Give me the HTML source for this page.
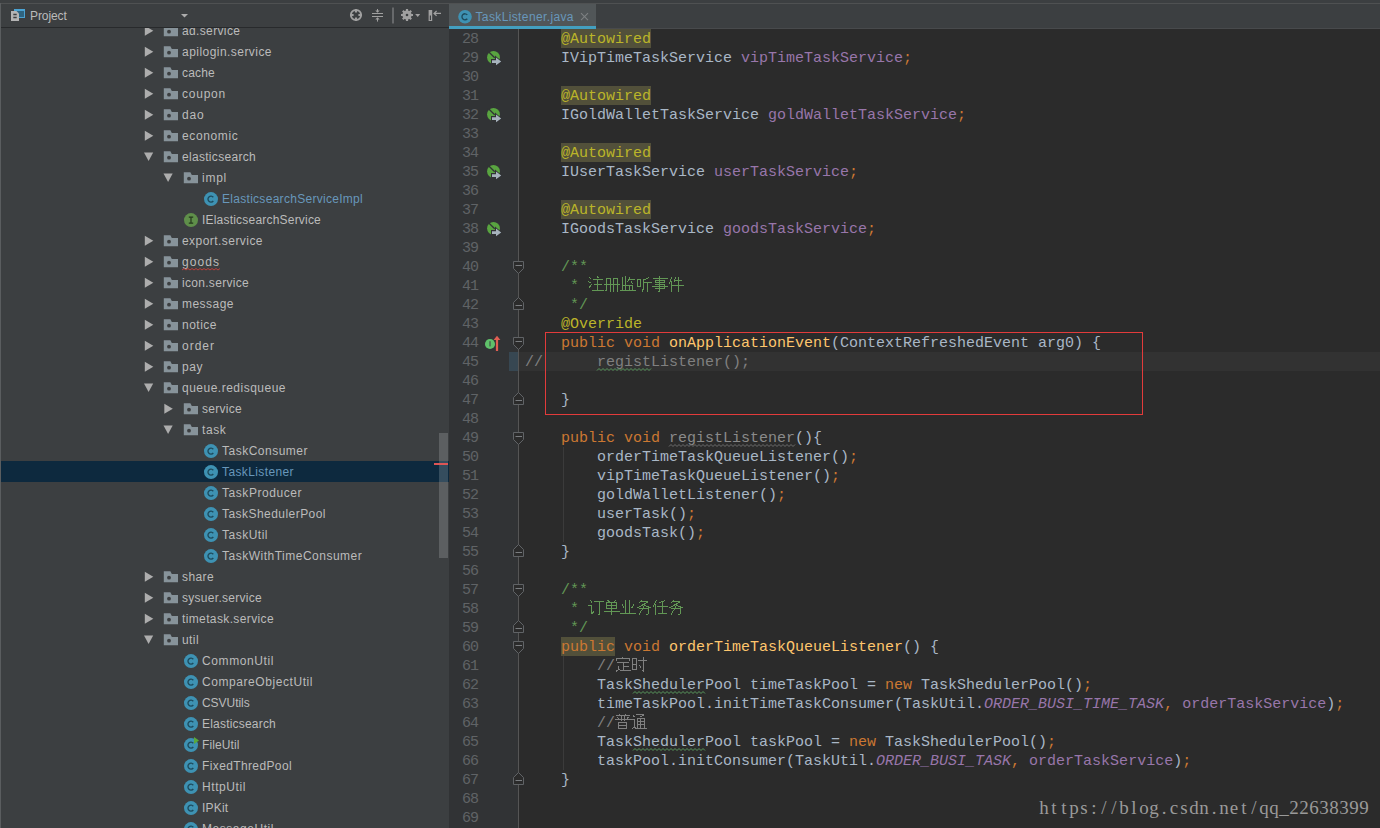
<!DOCTYPE html>
<html><head><meta charset="utf-8"><title>TaskListener.java</title>
<style>
html,body{margin:0;padding:0}
body{width:1380px;height:828px;overflow:hidden;position:relative;background:#2b2b2b;font-family:'Liberation Sans', sans-serif}
.abs,.abs>*{position:absolute}
#left{position:absolute;left:0;top:0;width:449px;height:828px;background:#3c3f41;overflow:hidden}
.row{position:absolute;left:0;width:449px;height:21px}
.lbl{position:absolute;white-space:pre;font:12px 'Liberation Sans', sans-serif;line-height:21px;height:21px;color:#bbbbbb;top:1px}
.blue{color:#6897bb}
svg{position:absolute;overflow:visible}
#code{position:absolute;left:0;top:0}
.ln{position:absolute;left:449px;width:29px;text-align:right;letter-spacing:-1px;font:15px 'Liberation Mono', monospace;line-height:19px;height:19px;color:#606366}
.cl{position:absolute;left:525px;white-space:pre;font:15px 'Liberation Mono', monospace;line-height:19px;height:19px;color:#a9b7c6}
.k{color:#cc7832}.a{color:#bbb529}.f{color:#9876aa}.sf{color:#9876aa;font-style:italic}.d{color:#629755}.c{color:#808080}.m{color:#ffc66d}
.hlb{position:absolute;height:19px;background:#52503a}
.g{color:#8a8a8a}
</style></head><body>

<div id="left">
<div class="row" style="top:19.5px;">
<svg style="left:0;top:0" width="1" height="1"><path d="M144.8 5.699999999999999L153.3 10.7L144.8 15.7Z" fill="#adadad"/></svg>
<svg style="left:0;top:0" width="1" height="1"><path d="M163.8 5.3h6.6l1.4 2.6h6.2v8.3h-14.2z" fill="#87939a"/><circle cx="169.0" cy="11.7" r="1.9" fill="#3c3f41"/></svg>
<span class="lbl" style="left:182.0px;letter-spacing:0.360px">ad.service</span>
</div>
<div class="row" style="top:40.5px;">
<svg style="left:0;top:0" width="1" height="1"><path d="M144.8 5.699999999999999L153.3 10.7L144.8 15.7Z" fill="#adadad"/></svg>
<svg style="left:0;top:0" width="1" height="1"><path d="M163.8 5.3h6.6l1.4 2.6h6.2v8.3h-14.2z" fill="#87939a"/><circle cx="169.0" cy="11.7" r="1.9" fill="#3c3f41"/></svg>
<span class="lbl" style="left:182.0px;letter-spacing:0.455px">apilogin.service</span>
</div>
<div class="row" style="top:61.5px;">
<svg style="left:0;top:0" width="1" height="1"><path d="M144.8 5.699999999999999L153.3 10.7L144.8 15.7Z" fill="#adadad"/></svg>
<svg style="left:0;top:0" width="1" height="1"><path d="M163.8 5.3h6.6l1.4 2.6h6.2v8.3h-14.2z" fill="#87939a"/><circle cx="169.0" cy="11.7" r="1.9" fill="#3c3f41"/></svg>
<span class="lbl" style="left:182.0px;letter-spacing:0.194px">cache</span>
</div>
<div class="row" style="top:82.5px;">
<svg style="left:0;top:0" width="1" height="1"><path d="M144.8 5.699999999999999L153.3 10.7L144.8 15.7Z" fill="#adadad"/></svg>
<svg style="left:0;top:0" width="1" height="1"><path d="M163.8 5.3h6.6l1.4 2.6h6.2v8.3h-14.2z" fill="#87939a"/><circle cx="169.0" cy="11.7" r="1.9" fill="#3c3f41"/></svg>
<span class="lbl" style="left:182.0px;letter-spacing:0.771px">coupon</span>
</div>
<div class="row" style="top:103.5px;">
<svg style="left:0;top:0" width="1" height="1"><path d="M144.8 5.699999999999999L153.3 10.7L144.8 15.7Z" fill="#adadad"/></svg>
<svg style="left:0;top:0" width="1" height="1"><path d="M163.8 5.3h6.6l1.4 2.6h6.2v8.3h-14.2z" fill="#87939a"/><circle cx="169.0" cy="11.7" r="1.9" fill="#3c3f41"/></svg>
<span class="lbl" style="left:182.0px;letter-spacing:0.856px">dao</span>
</div>
<div class="row" style="top:124.5px;">
<svg style="left:0;top:0" width="1" height="1"><path d="M144.8 5.699999999999999L153.3 10.7L144.8 15.7Z" fill="#adadad"/></svg>
<svg style="left:0;top:0" width="1" height="1"><path d="M163.8 5.3h6.6l1.4 2.6h6.2v8.3h-14.2z" fill="#87939a"/><circle cx="169.0" cy="11.7" r="1.9" fill="#3c3f41"/></svg>
<span class="lbl" style="left:182.0px;letter-spacing:0.618px">economic</span>
</div>
<div class="row" style="top:145.5px;">
<svg style="left:0;top:0" width="1" height="1"><path d="M144.0 6.499999999999999L153.2 6.499999999999999L148.6 14.899999999999999Z" fill="#adadad"/></svg>
<svg style="left:0;top:0" width="1" height="1"><path d="M163.8 5.3h6.6l1.4 2.6h6.2v8.3h-14.2z" fill="#87939a"/><circle cx="169.0" cy="11.7" r="1.9" fill="#3c3f41"/></svg>
<span class="lbl" style="left:182.0px;letter-spacing:0.305px">elasticsearch</span>
</div>
<div class="row" style="top:166.5px;">
<svg style="left:0;top:0" width="1" height="1"><path d="M163.5 6.499999999999999L172.7 6.499999999999999L168.1 14.899999999999999Z" fill="#adadad"/></svg>
<svg style="left:0;top:0" width="1" height="1"><path d="M183.8 5.3h6.6l1.4 2.6h6.2v8.3h-14.2z" fill="#87939a"/><circle cx="189.0" cy="11.7" r="1.9" fill="#3c3f41"/></svg>
<span class="lbl" style="left:202.0px;letter-spacing:0.746px">impl</span>
</div>
<div class="row" style="top:187.5px;">
<svg style="left:0;top:0" width="1" height="1"><circle cx="211" cy="11.1" r="7" fill="#3e92b3"/><path d="M213.3 9.2a3 3 0 1 0 0 3.8" stroke="#1d4a5c" stroke-width="1.35" fill="none"/></svg>
<span class="lbl blue" style="left:222.0px;letter-spacing:0.290px">ElasticsearchServiceImpl</span>
</div>
<div class="row" style="top:208.5px;">
<svg style="left:0;top:0" width="1" height="1"><circle cx="191" cy="11.1" r="7" fill="#5f8f4a"/><path d="M188.8 8.1h4.4M188.8 14.1h4.4M191 8.1v6" stroke="#25391d" stroke-width="1.2" fill="none"/></svg>
<span class="lbl" style="left:202.0px;letter-spacing:0.204px">IElasticsearchService</span>
</div>
<div class="row" style="top:229.5px;">
<svg style="left:0;top:0" width="1" height="1"><path d="M144.8 5.699999999999999L153.3 10.7L144.8 15.7Z" fill="#adadad"/></svg>
<svg style="left:0;top:0" width="1" height="1"><path d="M163.8 5.3h6.6l1.4 2.6h6.2v8.3h-14.2z" fill="#87939a"/><circle cx="169.0" cy="11.7" r="1.9" fill="#3c3f41"/></svg>
<span class="lbl" style="left:182.0px;letter-spacing:0.450px">export.service</span>
</div>
<div class="row" style="top:250.5px;">
<svg style="left:0;top:0" width="1" height="1"><path d="M144.8 5.699999999999999L153.3 10.7L144.8 15.7Z" fill="#adadad"/></svg>
<svg style="left:0;top:0" width="1" height="1"><path d="M163.8 5.3h6.6l1.4 2.6h6.2v8.3h-14.2z" fill="#87939a"/><circle cx="169.0" cy="11.7" r="1.9" fill="#3c3f41"/></svg>
<span class="lbl" style="left:182.0px;letter-spacing:1.059px">goods</span>
<svg style="left:0;top:0" width="1" height="1"><path d="M182 19L184 17.5L186 19L188 17.5L190 19L192 17.5L194 19L196 17.5L198 19L200 17.5L202 19L204 17.5L206 19L208 17.5L210 19L212 17.5L214 19L216 17.5L218 19L220 17.5" stroke="#bc3f3c" stroke-width="1" fill="none"/></svg>
</div>
<div class="row" style="top:271.5px;">
<svg style="left:0;top:0" width="1" height="1"><path d="M144.8 5.699999999999999L153.3 10.7L144.8 15.7Z" fill="#adadad"/></svg>
<svg style="left:0;top:0" width="1" height="1"><path d="M163.8 5.3h6.6l1.4 2.6h6.2v8.3h-14.2z" fill="#87939a"/><circle cx="169.0" cy="11.7" r="1.9" fill="#3c3f41"/></svg>
<span class="lbl" style="left:182.0px;letter-spacing:0.303px">icon.service</span>
</div>
<div class="row" style="top:292.5px;">
<svg style="left:0;top:0" width="1" height="1"><path d="M144.8 5.699999999999999L153.3 10.7L144.8 15.7Z" fill="#adadad"/></svg>
<svg style="left:0;top:0" width="1" height="1"><path d="M163.8 5.3h6.6l1.4 2.6h6.2v8.3h-14.2z" fill="#87939a"/><circle cx="169.0" cy="11.7" r="1.9" fill="#3c3f41"/></svg>
<span class="lbl" style="left:182.0px;letter-spacing:0.471px">message</span>
</div>
<div class="row" style="top:313.5px;">
<svg style="left:0;top:0" width="1" height="1"><path d="M144.8 5.699999999999999L153.3 10.7L144.8 15.7Z" fill="#adadad"/></svg>
<svg style="left:0;top:0" width="1" height="1"><path d="M163.8 5.3h6.6l1.4 2.6h6.2v8.3h-14.2z" fill="#87939a"/><circle cx="169.0" cy="11.7" r="1.9" fill="#3c3f41"/></svg>
<span class="lbl" style="left:182.0px;letter-spacing:0.495px">notice</span>
</div>
<div class="row" style="top:334.5px;">
<svg style="left:0;top:0" width="1" height="1"><path d="M144.8 5.699999999999999L153.3 10.7L144.8 15.7Z" fill="#adadad"/></svg>
<svg style="left:0;top:0" width="1" height="1"><path d="M163.8 5.3h6.6l1.4 2.6h6.2v8.3h-14.2z" fill="#87939a"/><circle cx="169.0" cy="11.7" r="1.9" fill="#3c3f41"/></svg>
<span class="lbl" style="left:182.0px;letter-spacing:0.997px">order</span>
</div>
<div class="row" style="top:355.5px;">
<svg style="left:0;top:0" width="1" height="1"><path d="M144.8 5.699999999999999L153.3 10.7L144.8 15.7Z" fill="#adadad"/></svg>
<svg style="left:0;top:0" width="1" height="1"><path d="M163.8 5.3h6.6l1.4 2.6h6.2v8.3h-14.2z" fill="#87939a"/><circle cx="169.0" cy="11.7" r="1.9" fill="#3c3f41"/></svg>
<span class="lbl" style="left:182.0px;letter-spacing:0.547px">pay</span>
</div>
<div class="row" style="top:376.5px;">
<svg style="left:0;top:0" width="1" height="1"><path d="M144.0 6.499999999999999L153.2 6.499999999999999L148.6 14.899999999999999Z" fill="#adadad"/></svg>
<svg style="left:0;top:0" width="1" height="1"><path d="M163.8 5.3h6.6l1.4 2.6h6.2v8.3h-14.2z" fill="#87939a"/><circle cx="169.0" cy="11.7" r="1.9" fill="#3c3f41"/></svg>
<span class="lbl" style="left:182.0px;letter-spacing:0.494px">queue.redisqueue</span>
</div>
<div class="row" style="top:397.5px;">
<svg style="left:0;top:0" width="1" height="1"><path d="M164.3 5.699999999999999L172.8 10.7L164.3 15.7Z" fill="#adadad"/></svg>
<svg style="left:0;top:0" width="1" height="1"><path d="M183.8 5.3h6.6l1.4 2.6h6.2v8.3h-14.2z" fill="#87939a"/><circle cx="189.0" cy="11.7" r="1.9" fill="#3c3f41"/></svg>
<span class="lbl" style="left:202.0px;letter-spacing:0.283px">service</span>
</div>
<div class="row" style="top:418.5px;">
<svg style="left:0;top:0" width="1" height="1"><path d="M163.5 6.499999999999999L172.7 6.499999999999999L168.1 14.899999999999999Z" fill="#adadad"/></svg>
<svg style="left:0;top:0" width="1" height="1"><path d="M183.8 5.3h6.6l1.4 2.6h6.2v8.3h-14.2z" fill="#87939a"/><circle cx="189.0" cy="11.7" r="1.9" fill="#3c3f41"/></svg>
<span class="lbl" style="left:202.0px;letter-spacing:0.571px">task</span>
</div>
<div class="row" style="top:439.5px;">
<svg style="left:0;top:0" width="1" height="1"><circle cx="211" cy="11.1" r="7" fill="#3e92b3"/><path d="M213.3 9.2a3 3 0 1 0 0 3.8" stroke="#1d4a5c" stroke-width="1.35" fill="none"/></svg>
<span class="lbl" style="left:222.0px;letter-spacing:0.497px">TaskConsumer</span>
</div>
<div class="row" style="top:460.5px;background:#0d293e;">
<svg style="left:0;top:0" width="1" height="1"><circle cx="211" cy="11.1" r="7" fill="#3e92b3"/><path d="M213.3 9.2a3 3 0 1 0 0 3.8" stroke="#1d4a5c" stroke-width="1.35" fill="none"/></svg>
<span class="lbl blue" style="left:222.0px;letter-spacing:0.385px">TaskListener</span>
</div>
<div class="row" style="top:481.5px;">
<svg style="left:0;top:0" width="1" height="1"><circle cx="211" cy="11.1" r="7" fill="#3e92b3"/><path d="M213.3 9.2a3 3 0 1 0 0 3.8" stroke="#1d4a5c" stroke-width="1.35" fill="none"/></svg>
<span class="lbl" style="left:222.0px;letter-spacing:0.552px">TaskProducer</span>
</div>
<div class="row" style="top:502.5px;">
<svg style="left:0;top:0" width="1" height="1"><circle cx="211" cy="11.1" r="7" fill="#3e92b3"/><path d="M213.3 9.2a3 3 0 1 0 0 3.8" stroke="#1d4a5c" stroke-width="1.35" fill="none"/></svg>
<span class="lbl" style="left:222.0px;letter-spacing:0.454px">TaskShedulerPool</span>
</div>
<div class="row" style="top:523.5px;">
<svg style="left:0;top:0" width="1" height="1"><circle cx="211" cy="11.1" r="7" fill="#3e92b3"/><path d="M213.3 9.2a3 3 0 1 0 0 3.8" stroke="#1d4a5c" stroke-width="1.35" fill="none"/></svg>
<span class="lbl" style="left:222.0px;letter-spacing:0.498px">TaskUtil</span>
</div>
<div class="row" style="top:544.5px;">
<svg style="left:0;top:0" width="1" height="1"><circle cx="211" cy="11.1" r="7" fill="#3e92b3"/><path d="M213.3 9.2a3 3 0 1 0 0 3.8" stroke="#1d4a5c" stroke-width="1.35" fill="none"/></svg>
<span class="lbl" style="left:222.0px;letter-spacing:0.502px">TaskWithTimeConsumer</span>
</div>
<div class="row" style="top:565.5px;">
<svg style="left:0;top:0" width="1" height="1"><path d="M144.8 5.699999999999999L153.3 10.7L144.8 15.7Z" fill="#adadad"/></svg>
<svg style="left:0;top:0" width="1" height="1"><path d="M163.8 5.3h6.6l1.4 2.6h6.2v8.3h-14.2z" fill="#87939a"/><circle cx="169.0" cy="11.7" r="1.9" fill="#3c3f41"/></svg>
<span class="lbl" style="left:182.0px;letter-spacing:0.394px">share</span>
</div>
<div class="row" style="top:586.5px;">
<svg style="left:0;top:0" width="1" height="1"><path d="M144.8 5.699999999999999L153.3 10.7L144.8 15.7Z" fill="#adadad"/></svg>
<svg style="left:0;top:0" width="1" height="1"><path d="M163.8 5.3h6.6l1.4 2.6h6.2v8.3h-14.2z" fill="#87939a"/><circle cx="169.0" cy="11.7" r="1.9" fill="#3c3f41"/></svg>
<span class="lbl" style="left:182.0px;letter-spacing:0.283px">sysuer.service</span>
</div>
<div class="row" style="top:607.5px;">
<svg style="left:0;top:0" width="1" height="1"><path d="M144.8 5.699999999999999L153.3 10.7L144.8 15.7Z" fill="#adadad"/></svg>
<svg style="left:0;top:0" width="1" height="1"><path d="M163.8 5.3h6.6l1.4 2.6h6.2v8.3h-14.2z" fill="#87939a"/><circle cx="169.0" cy="11.7" r="1.9" fill="#3c3f41"/></svg>
<span class="lbl" style="left:182.0px;letter-spacing:0.373px">timetask.service</span>
</div>
<div class="row" style="top:628.5px;">
<svg style="left:0;top:0" width="1" height="1"><path d="M144.0 6.499999999999999L153.2 6.499999999999999L148.6 14.899999999999999Z" fill="#adadad"/></svg>
<svg style="left:0;top:0" width="1" height="1"><path d="M163.8 5.3h6.6l1.4 2.6h6.2v8.3h-14.2z" fill="#87939a"/><circle cx="169.0" cy="11.7" r="1.9" fill="#3c3f41"/></svg>
<span class="lbl" style="left:182.0px;letter-spacing:0.414px">util</span>
</div>
<div class="row" style="top:649.5px;">
<svg style="left:0;top:0" width="1" height="1"><circle cx="191" cy="11.1" r="7" fill="#3e92b3"/><path d="M193.3 9.2a3 3 0 1 0 0 3.8" stroke="#1d4a5c" stroke-width="1.35" fill="none"/></svg>
<span class="lbl" style="left:202.0px;letter-spacing:0.598px">CommonUtil</span>
</div>
<div class="row" style="top:670.5px;">
<svg style="left:0;top:0" width="1" height="1"><circle cx="191" cy="11.1" r="7" fill="#3e92b3"/><path d="M193.3 9.2a3 3 0 1 0 0 3.8" stroke="#1d4a5c" stroke-width="1.35" fill="none"/></svg>
<span class="lbl" style="left:202.0px;letter-spacing:0.566px">CompareObjectUtil</span>
</div>
<div class="row" style="top:691.5px;">
<svg style="left:0;top:0" width="1" height="1"><circle cx="191" cy="11.1" r="7" fill="#3e92b3"/><path d="M193.3 9.2a3 3 0 1 0 0 3.8" stroke="#1d4a5c" stroke-width="1.35" fill="none"/></svg>
<span class="lbl" style="left:202.0px;letter-spacing:-0.052px">CSVUtils</span>
</div>
<div class="row" style="top:712.5px;">
<svg style="left:0;top:0" width="1" height="1"><circle cx="191" cy="11.1" r="7" fill="#3e92b3"/><path d="M193.3 9.2a3 3 0 1 0 0 3.8" stroke="#1d4a5c" stroke-width="1.35" fill="none"/></svg>
<span class="lbl" style="left:202.0px;letter-spacing:0.202px">Elasticsearch</span>
</div>
<div class="row" style="top:733.5px;">
<svg style="left:0;top:0" width="1" height="1"><circle cx="191" cy="11.1" r="7" fill="#3e92b3"/><path d="M193.3 9.2a3 3 0 1 0 0 3.8" stroke="#1d4a5c" stroke-width="1.35" fill="none"/><path d="M194 3.0999999999999996l5 3.5l-5 3.5z" fill="#59a83b"/></svg>
<span class="lbl" style="left:202.0px;letter-spacing:0.116px">FileUtil</span>
</div>
<div class="row" style="top:754.5px;">
<svg style="left:0;top:0" width="1" height="1"><circle cx="191" cy="11.1" r="7" fill="#3e92b3"/><path d="M193.3 9.2a3 3 0 1 0 0 3.8" stroke="#1d4a5c" stroke-width="1.35" fill="none"/></svg>
<span class="lbl" style="left:202.0px;letter-spacing:0.377px">FixedThredPool</span>
</div>
<div class="row" style="top:775.5px;">
<svg style="left:0;top:0" width="1" height="1"><circle cx="191" cy="11.1" r="7" fill="#3e92b3"/><path d="M193.3 9.2a3 3 0 1 0 0 3.8" stroke="#1d4a5c" stroke-width="1.35" fill="none"/></svg>
<span class="lbl" style="left:202.0px;letter-spacing:0.582px">HttpUtil</span>
</div>
<div class="row" style="top:796.5px;">
<svg style="left:0;top:0" width="1" height="1"><circle cx="191" cy="11.1" r="7" fill="#3e92b3"/><path d="M193.3 9.2a3 3 0 1 0 0 3.8" stroke="#1d4a5c" stroke-width="1.35" fill="none"/></svg>
<span class="lbl" style="left:202.0px;letter-spacing:0.191px">IPKit</span>
</div>
<div class="row" style="top:817.5px;">
<svg style="left:0;top:0" width="1" height="1"><circle cx="191" cy="11.1" r="7" fill="#3e92b3"/><path d="M193.3 9.2a3 3 0 1 0 0 3.8" stroke="#1d4a5c" stroke-width="1.35" fill="none"/></svg>
<span class="lbl" style="left:202.0px;letter-spacing:0.543px">MessageUtil</span>
</div>
<div style="position:absolute;left:439px;top:433px;width:9px;height:125px;background:rgba(255,255,255,0.17)"></div>
<div style="position:absolute;left:434px;top:463px;width:14px;height:2px;background:#dd5555"></div>
<div style="position:absolute;left:0;top:0;width:449px;height:27px;background:#3c3f41"></div>
<div style="position:absolute;left:0;top:3px;width:449px;height:1px;background:#4f5152"></div>
<div style="position:absolute;left:0;top:27px;width:449px;height:1px;background:#282a2c"></div>
<div style="position:absolute;left:0;top:3px;width:1px;height:825px;background:#5a5d5f"></div>
<svg style="left:0;top:0" width="1" height="1"><rect x="14.5" y="9.5" width="10" height="8" fill="#2f6480" stroke="#4ba3d3" stroke-width="1"/><rect x="14" y="9" width="11" height="2" fill="#4ba3d3"/><path d="M11 11h5.5l2.5 2.5v7.5h-8z" fill="#b4b4b4"/><path d="M13.3 14.5h3.4M13.3 17.5h3.4" stroke="#3c3f41" stroke-width="1.4"/></svg>
<span style="position:absolute;left:30px;top:7px;font:12px 'Liberation Sans', sans-serif;line-height:19px;color:#bbbbbb;letter-spacing:-0.080px">Project</span>
<svg style="left:0;top:0" width="1" height="1"><path d="M181 14h7l-3.5 3.6z" fill="#adadad"/></svg>
<svg style="left:0;top:0" width="1" height="1"><circle cx="356" cy="15" r="5.1" fill="none" stroke="#a0a0a0" stroke-width="2"/><path d="M356 9v3.6M356 17.4v3.6M350 15h3.6M358.4 15h3.6" stroke="#a0a0a0" stroke-width="2"/><path d="M372 13.5h11M372 16.5h11" stroke="#a0a0a0" stroke-width="1"/><path d="M377.5 9v3M377.5 18v3.6" stroke="#a0a0a0" stroke-width="1"/><path d="M375.3 10.4l2.2 2.4l2.2-2.4zM375.3 19.6l2.2-2.4l2.2 2.4z" fill="#a0a0a0"/><rect x="392" y="7.5" width="2" height="16" fill="#67696b"/><circle cx="407" cy="15" r="3.3" fill="none" stroke="#a0a0a0" stroke-width="2.6"/><path d="M407 9v12M401 15h12M402.8 10.8l8.4 8.4M411.2 10.8l-8.4 8.4" stroke="#a0a0a0" stroke-width="2.2"/><circle cx="407" cy="15" r="1.3" fill="#3c3f41"/><path d="M415.2 14h5l-2.5 3z" fill="#a0a0a0"/><rect x="428.6" y="10" width="3.6" height="11" fill="#a0a0a0"/><rect x="429.8" y="15.5" width="1.2" height="4.5" fill="#3c3f41"/><path d="M434 13.4h7M436.6 11l-2.6 2.4l2.6 2.4" stroke="#a0a0a0" stroke-width="1.2" fill="none"/></svg>
</div>
<div style="position:absolute;left:449px;top:0;width:931px;height:29px;background:#3c3f41"></div>
<div style="position:absolute;left:449px;top:3px;width:931px;height:1px;background:#4f5152"></div>
<div style="position:absolute;left:449px;top:28px;width:931px;height:1px;background:#484a4c"></div>
<div style="position:absolute;left:449px;top:4px;width:147px;height:22px;background:#515658"></div>
<div style="position:absolute;left:449px;top:26px;width:147px;height:3px;background:#439fc0"></div>
<svg style="left:0;top:0" width="1" height="1"><circle cx="465" cy="16.8" r="6.8" fill="#3e92b3"/><path d="M467.3 14.9a3 3 0 1 0 0 3.8" stroke="#1d4a5c" stroke-width="1.35" fill="none"/><path d="M581 13.2l7 7M588 13.2l-7 7" stroke="#7d8082" stroke-width="1.1"/></svg>
<span style="position:absolute;left:475.5px;top:8px;font:12px 'Liberation Sans', sans-serif;line-height:19px;color:#6897bb;letter-spacing:0.373px">TaskListener.java</span>
<div style="position:absolute;left:449px;top:29px;width:69px;height:799px;background:#313335"></div>
<div style="position:absolute;left:518px;top:29px;width:1px;height:799px;background:#555555"></div>
<div style="position:absolute;left:519px;top:352px;width:861px;height:19px;background:#323232"></div>
<div style="position:absolute;left:509px;top:352px;width:9px;height:19px;background:#374752"></div>
<div class="ln" style="top:30px">28</div>
<div class="hlb" style="left:561px;top:29px;width:90px"></div>
<div class="cl" style="top:30px">    <span class="a hl">@Autowired</span></div>
<div class="ln" style="top:49px">29</div>
<div class="cl" style="top:49px">    IVipTimeTaskService <span class="f">vipTimeTaskService</span><span class="k">;</span></div>
<div class="ln" style="top:68px">30</div>
<div class="ln" style="top:87px">31</div>
<div class="hlb" style="left:561px;top:86px;width:90px"></div>
<div class="cl" style="top:87px">    <span class="a hl">@Autowired</span></div>
<div class="ln" style="top:106px">32</div>
<div class="cl" style="top:106px">    IGoldWalletTaskService <span class="f">goldWalletTaskService</span><span class="k">;</span></div>
<div class="ln" style="top:125px">33</div>
<div class="ln" style="top:144px">34</div>
<div class="hlb" style="left:561px;top:143px;width:90px"></div>
<div class="cl" style="top:144px">    <span class="a hl">@Autowired</span></div>
<div class="ln" style="top:163px">35</div>
<div class="cl" style="top:163px">    IUserTaskService <span class="f">userTaskService</span><span class="k">;</span></div>
<div class="ln" style="top:182px">36</div>
<div class="ln" style="top:201px">37</div>
<div class="hlb" style="left:561px;top:200px;width:90px"></div>
<div class="cl" style="top:201px">    <span class="a hl">@Autowired</span></div>
<div class="ln" style="top:220px">38</div>
<div class="cl" style="top:220px">    IGoodsTaskService <span class="f">goodsTaskService</span><span class="k">;</span></div>
<div class="ln" style="top:239px">39</div>
<div class="ln" style="top:258px">40</div>
<div class="cl" style="top:258px">    <span class="d">/**</span></div>
<div class="ln" style="top:277px">41</div>
<div class="cl" style="top:277px">    <span class="d"> * </span></div>
<div class="ln" style="top:296px">42</div>
<div class="cl" style="top:296px">    <span class="d"> */</span></div>
<div class="ln" style="top:315px">43</div>
<div class="cl" style="top:315px">    <span class="a">@Override</span></div>
<div class="ln" style="top:334px">44</div>
<div class="cl" style="top:334px">    <span class="k">public void </span><span class="m">onApplicationEvent</span>(ContextRefreshedEvent arg0) {</div>
<div class="ln" style="top:353px">45</div>
<div class="cl" style="top:353px"><span class="c">//      registListener();</span></div>
<div class="ln" style="top:372px">46</div>
<div class="ln" style="top:391px">47</div>
<div class="cl" style="top:391px">    }</div>
<div class="ln" style="top:410px">48</div>
<div class="ln" style="top:429px">49</div>
<div class="cl" style="top:429px">    <span class="k">public void </span><span class="g">registListener</span>(){</div>
<div class="ln" style="top:448px">50</div>
<div class="cl" style="top:448px">        orderTimeTaskQueueListener()<span class="k">;</span></div>
<div class="ln" style="top:467px">51</div>
<div class="cl" style="top:467px">        vipTimeTaskQueueListener()<span class="k">;</span></div>
<div class="ln" style="top:486px">52</div>
<div class="cl" style="top:486px">        goldWalletListener()<span class="k">;</span></div>
<div class="ln" style="top:505px">53</div>
<div class="cl" style="top:505px">        userTask()<span class="k">;</span></div>
<div class="ln" style="top:524px">54</div>
<div class="cl" style="top:524px">        goodsTask()<span class="k">;</span></div>
<div class="ln" style="top:543px">55</div>
<div class="cl" style="top:543px">    }</div>
<div class="ln" style="top:562px">56</div>
<div class="ln" style="top:581px">57</div>
<div class="cl" style="top:581px">    <span class="d">/**</span></div>
<div class="ln" style="top:600px">58</div>
<div class="cl" style="top:600px">    <span class="d"> * </span></div>
<div class="ln" style="top:619px">59</div>
<div class="cl" style="top:619px">    <span class="d"> */</span></div>
<div class="ln" style="top:638px">60</div>
<div class="hlb" style="left:561px;top:637px;width:54px"></div>
<div class="cl" style="top:638px">    <span class="k hl2">public</span><span class="k"> void </span><span class="m">orderTimeTaskQueueListener</span>() {</div>
<div class="ln" style="top:657px">61</div>
<div class="cl" style="top:657px">        <span class="c">//</span></div>
<div class="ln" style="top:676px">62</div>
<div class="cl" style="top:676px">        TaskShedulerPool timeTaskPool = <span class="k">new </span>TaskShedulerPool()<span class="k">;</span></div>
<div class="ln" style="top:695px">63</div>
<div class="cl" style="top:695px">        timeTaskPool.initTimeTaskConsumer(TaskUtil.<span class="sf">ORDER_BUSI_TIME_TASK</span><span class="k">, </span><span class="f">orderTaskService</span>)<span class="k">;</span></div>
<div class="ln" style="top:714px">64</div>
<div class="cl" style="top:714px">        <span class="c">//</span></div>
<div class="ln" style="top:733px">65</div>
<div class="cl" style="top:733px">        TaskShedulerPool taskPool = <span class="k">new </span>TaskShedulerPool()<span class="k">;</span></div>
<div class="ln" style="top:752px">66</div>
<div class="cl" style="top:752px">        taskPool.initConsumer(TaskUtil.<span class="sf">ORDER_BUSI_TASK</span><span class="k">, </span><span class="f">orderTaskService</span>)<span class="k">;</span></div>
<div class="ln" style="top:771px">67</div>
<div class="cl" style="top:771px">    }</div>
<div class="ln" style="top:790px">68</div>
<div class="ln" style="top:809px">69</div>
<svg style="left:588px;top:276px" width="16" height="16" viewBox="0 0 16 16"><path d="M1.5 1.5L3.5 3.5M0.5 5.5L2.5 7.0M0.5 12.5L3.5 8.5M9.5 0.5L10.5 2.5M5.0 3.5H15.0M6.0 8.5H14.0M9.5 3.0V15.0M4.0 14.5H16.0" stroke="#629755" stroke-width="1" fill="none" shape-rendering="crispEdges"/></svg>
<svg style="left:604px;top:276px" width="16" height="16" viewBox="0 0 16 16"><path d="M2.5 2.0V13.0M3.0 12.5L1.5 15.5M2.0 2.5H7.0M6.5 2.0V15.5M9.5 2.0V15.5M9.0 2.5H14.0M13.5 2.0V16.0M0.0 8.5H16.0" stroke="#629755" stroke-width="1" fill="none" shape-rendering="crispEdges"/></svg>
<svg style="left:620px;top:276px" width="16" height="16" viewBox="0 0 16 16"><path d="M2.5 1.0V10.0M5.5 0.0V10.0M10.0 1.5L7.5 6.0M8.0 3.5H15.0M11.0 5.5L13.0 8.0M2.0 9.5H13.0M2.5 9.5V15.0M5.5 9.5V15.0M9.5 9.5V15.0M12.5 9.5V15.0M0.0 14.5H16.0" stroke="#629755" stroke-width="1" fill="none" shape-rendering="crispEdges"/></svg>
<svg style="left:636px;top:276px" width="16" height="16" viewBox="0 0 16 16"><path d="M1.0 3.5H5.0M1.0 10.5H5.0M1.5 3.0V11.0M4.5 3.0V11.0M13.5 1.5L8.5 3.5M7.5 3.0V12.0M8.0 11.5L6.0 15.5M7.0 6.5H16.0M11.5 6.0V16.0" stroke="#629755" stroke-width="1" fill="none" shape-rendering="crispEdges"/></svg>
<svg style="left:652px;top:276px" width="16" height="16" viewBox="0 0 16 16"><path d="M1.0 2.5H16.0M3.0 4.5H13.0M3.0 6.5H13.0M3.5 4.0V7.0M12.5 4.0V7.0M3.0 8.5H13.0M0.0 10.5H16.0M3.0 12.5H13.0M12.5 8.0V13.0M7.5 0.0V16.0M8.0 15.5L6.5 15.0" stroke="#629755" stroke-width="1" fill="none" shape-rendering="crispEdges"/></svg>
<svg style="left:668px;top:276px" width="16" height="16" viewBox="0 0 16 16"><path d="M4.0 1.0L1.0 8.0M3.5 4.5V16.0M7.5 1.5L6.0 5.5M6.0 4.5H14.0M4.0 9.5H16.0M10.5 0.5V16.0" stroke="#629755" stroke-width="1" fill="none" shape-rendering="crispEdges"/></svg>
<svg style="left:588px;top:599px" width="16" height="16" viewBox="0 0 16 16"><path d="M2.5 1.5L4.0 3.5M0.0 6.5H4.0M3.5 6.0V15.0M4.0 14.5L6.0 12.5M6.0 2.5H16.0M11.5 2.5V16.0M12.0 15.5L10.0 15.0" stroke="#629755" stroke-width="1" fill="none" shape-rendering="crispEdges"/></svg>
<svg style="left:604px;top:599px" width="16" height="16" viewBox="0 0 16 16"><path d="M3.5 1.0L5.5 3.0M12.0 1.0L10.0 3.0M2.0 3.5H13.0M2.0 9.5H13.0M2.5 3.0V10.0M12.5 3.0V10.0M2.0 6.5H13.0M0.0 12.5H16.0M7.5 3.5V16.0" stroke="#629755" stroke-width="1" fill="none" shape-rendering="crispEdges"/></svg>
<svg style="left:620px;top:599px" width="16" height="16" viewBox="0 0 16 16"><path d="M5.5 0.5V15.0M9.5 0.5V15.0M2.0 5.0L4.0 9.0M14.0 5.0L11.5 9.5M0.0 14.5H16.0" stroke="#629755" stroke-width="1" fill="none" shape-rendering="crispEdges"/></svg>
<svg style="left:636px;top:599px" width="16" height="16" viewBox="0 0 16 16"><path d="M6.0 1.0L3.0 4.0M4.0 2.5H12.0M12.0 3.0L1.5 9.0M6.5 5.5L15.0 9.0M3.0 9.5H13.0M12.5 10.0L12.0 15.0M12.0 15.0L10.5 15.5M8.0 7.5L3.0 15.5" stroke="#629755" stroke-width="1" fill="none" shape-rendering="crispEdges"/></svg>
<svg style="left:652px;top:599px" width="16" height="16" viewBox="0 0 16 16"><path d="M4.5 1.0L1.0 8.0M3.5 4.5V16.0M13.5 1.5L7.0 3.5M5.0 7.5H16.0M10.5 2.5V15.0M6.0 14.5H15.0" stroke="#629755" stroke-width="1" fill="none" shape-rendering="crispEdges"/></svg>
<svg style="left:668px;top:599px" width="16" height="16" viewBox="0 0 16 16"><path d="M6.0 1.0L3.0 4.0M4.0 2.5H12.0M12.0 3.0L1.5 9.0M6.5 5.5L15.0 9.0M3.0 9.5H13.0M12.5 10.0L12.0 15.0M12.0 15.0L10.5 15.5M8.0 7.5L3.0 15.5" stroke="#629755" stroke-width="1" fill="none" shape-rendering="crispEdges"/></svg>
<svg style="left:615px;top:656px" width="16" height="16" viewBox="0 0 16 16"><path d="M7.0 1.0L8.5 2.5M1.0 2.5H15.0M2.0 3.0L1.0 5.0M15.0 3.0L14.0 5.0M2.0 6.5H14.0M8.5 6.5V15.0M8.0 10.5H14.0M3.5 9.5V13.5M4.0 13.0L1.0 15.5M4.0 13.0L6.5 15.0M6.0 14.5H16.0" stroke="#808080" stroke-width="1" fill="none" shape-rendering="crispEdges"/></svg>
<svg style="left:631px;top:656px" width="16" height="16" viewBox="0 0 16 16"><path d="M1.0 2.5H6.0M1.0 13.5H6.0M1.5 2.0V14.0M5.5 2.0V14.0M1.0 8.5H6.0M7.0 4.5H16.0M12.5 0.5V16.0M13.0 15.5L11.0 14.5M8.5 9.0L10.0 11.5" stroke="#808080" stroke-width="1" fill="none" shape-rendering="crispEdges"/></svg>
<svg style="left:615px;top:713px" width="16" height="16" viewBox="0 0 16 16"><path d="M4.5 1.0L5.5 2.5M11.0 1.0L10.0 2.5M1.0 2.5H15.0M6.5 2.5V7.5M9.5 2.5V7.5M2.5 4.0L3.5 6.0M13.5 4.0L12.0 6.0M0.0 6.5H16.0M3.0 9.5H12.0M3.0 15.5H12.0M3.5 9.0V16.0M11.5 9.0V16.0M3.0 12.5H12.0" stroke="#808080" stroke-width="1" fill="none" shape-rendering="crispEdges"/></svg>
<svg style="left:631px;top:713px" width="16" height="16" viewBox="0 0 16 16"><path d="M2.0 2.0L3.5 4.0M0.0 6.5H4.0M3.5 6.5V15.0M3.5 14.5L1.0 15.5M3.5 14.5L5.5 15.5M5.0 15.5H16.0M5.0 1.5H13.0M13.0 2.0L9.5 4.0M6.0 5.5H14.0M6.5 5.5V15.0M13.5 5.5V15.5M9.5 5.5V15.0M6.0 8.5H14.0M6.0 11.5H14.0" stroke="#808080" stroke-width="1" fill="none" shape-rendering="crispEdges"/></svg>
<svg style="left:0;top:0" width="1" height="1"><path d="M597 370.5L599 368.5L601 370.5L603 368.5L605 370.5L607 368.5L609 370.5L611 368.5L613 370.5L615 368.5L617 370.5L619 368.5L621 370.5L623 368.5L625 370.5L627 368.5L629 370.5L631 368.5L633 370.5L635 368.5L637 370.5L639 368.5L641 370.5L643 368.5L645 370.5L647 368.5L649 370.5L651 368.5" stroke="#5a9a5e" stroke-width="1" fill="none"/></svg>
<svg style="left:0;top:0" width="1" height="1"><path d="M669 446.5L671 444.5L673 446.5L675 444.5L677 446.5L679 444.5L681 446.5L683 444.5L685 446.5L687 444.5L689 446.5L691 444.5L693 446.5L695 444.5L697 446.5L699 444.5L701 446.5L703 444.5L705 446.5L707 444.5L709 446.5L711 444.5L713 446.5L715 444.5L717 446.5L719 444.5L721 446.5L723 444.5L725 446.5L727 444.5L729 446.5L731 444.5L733 446.5L735 444.5L737 446.5L739 444.5L741 446.5L743 444.5L745 446.5L747 444.5L749 446.5L751 444.5L753 446.5L755 444.5L757 446.5L759 444.5L761 446.5L763 444.5L765 446.5L767 444.5L769 446.5L771 444.5L773 446.5L775 444.5L777 446.5L779 444.5L781 446.5L783 444.5L785 446.5L787 444.5L789 446.5L791 444.5L793 446.5L795 444.5" stroke="#6e6e6e" stroke-width="1" fill="none"/></svg>
<svg style="left:0;top:0" width="1" height="1"><path d="M633 693.5L635 691.5L637 693.5L639 691.5L641 693.5L643 691.5L645 693.5L647 691.5L649 693.5L651 691.5L653 693.5L655 691.5L657 693.5L659 691.5L661 693.5L663 691.5L665 693.5L667 691.5L669 693.5L671 691.5L673 693.5L675 691.5L677 693.5L679 691.5L681 693.5L683 691.5L685 693.5L687 691.5L689 693.5L691 691.5L693 693.5L695 691.5L697 693.5L699 691.5L701 693.5L703 691.5L705 693.5" stroke="#5a9a5e" stroke-width="1" fill="none"/></svg>
<svg style="left:0;top:0" width="1" height="1"><path d="M633 750.5L635 748.5L637 750.5L639 748.5L641 750.5L643 748.5L645 750.5L647 748.5L649 750.5L651 748.5L653 750.5L655 748.5L657 750.5L659 748.5L661 750.5L663 748.5L665 750.5L667 748.5L669 750.5L671 748.5L673 750.5L675 748.5L677 750.5L679 748.5L681 750.5L683 748.5L685 750.5L687 748.5L689 750.5L691 748.5L693 750.5L695 748.5L697 750.5L699 748.5L701 750.5L703 748.5L705 750.5" stroke="#5a9a5e" stroke-width="1" fill="none"/></svg>
<div style="position:absolute;left:563px;top:447px;width:1px;height:95px;background:#3b3b3b"></div>
<div style="position:absolute;left:563px;top:656px;width:1px;height:114px;background:#3b3b3b"></div>
<svg style="left:0;top:0" width="1" height="1"><circle cx="493.5" cy="57.4" r="6.4" fill="#59a540"/><path d="M488.3 51.5L494.7 57.7" stroke="#313335" stroke-width="1.3"/><path d="M491.0 59.1H495.0V55.5L502.1 61.5L495.0 66.5V64.0H491.0Z" fill="#313335"/><path d="M492.0 60.2H496.0V57.5L501.2 61.5L496.0 65.3V62.9H492.0Z" fill="#a7b3bd"/></svg>
<svg style="left:0;top:0" width="1" height="1"><circle cx="493.5" cy="114.39999999999999" r="6.4" fill="#59a540"/><path d="M488.3 108.5L494.7 114.69999999999999" stroke="#313335" stroke-width="1.3"/><path d="M491.0 116.1H495.0V112.5L502.1 118.5L495.0 123.5V121.0H491.0Z" fill="#313335"/><path d="M492.0 117.19999999999999H496.0V114.5L501.2 118.5L496.0 122.3V119.89999999999999H492.0Z" fill="#a7b3bd"/></svg>
<svg style="left:0;top:0" width="1" height="1"><circle cx="493.5" cy="171.4" r="6.4" fill="#59a540"/><path d="M488.3 165.5L494.7 171.7" stroke="#313335" stroke-width="1.3"/><path d="M491.0 173.1H495.0V169.5L502.1 175.5L495.0 180.5V178.0H491.0Z" fill="#313335"/><path d="M492.0 174.2H496.0V171.5L501.2 175.5L496.0 179.29999999999998V176.9H492.0Z" fill="#a7b3bd"/></svg>
<svg style="left:0;top:0" width="1" height="1"><circle cx="493.5" cy="228.4" r="6.4" fill="#59a540"/><path d="M488.3 222.5L494.7 228.7" stroke="#313335" stroke-width="1.3"/><path d="M491.0 230.1H495.0V226.5L502.1 232.5L495.0 237.5V235.0H491.0Z" fill="#313335"/><path d="M492.0 231.2H496.0V228.5L501.2 232.5L496.0 236.29999999999998V233.9H492.0Z" fill="#a7b3bd"/></svg>
<svg style="left:0;top:0" width="1" height="1"><circle cx="490" cy="344" r="5.05" fill="#5fc16a"/><rect x="489" y="341.2" width="2" height="5.2" fill="#4d7d54"/><path d="M497 351V338" stroke="#e05e52" stroke-width="2.2"/><path d="M493.6 340L497 335.8L500.4 340Z" fill="#e05e52"/></svg>
<svg style="left:0;top:0" width="1" height="1"><path d="M513.5 261.5H523.5V268.5L518.5 273.5L513.5 268.5Z" fill="#2b2b2b" stroke="#606366" stroke-width="1"/><path d="M515.5 265.5H522" stroke="#7a7d80" stroke-width="1"/></svg>
<svg style="left:0;top:0" width="1" height="1"><path d="M513.5 337.5H523.5V344.5L518.5 349.5L513.5 344.5Z" fill="#2b2b2b" stroke="#606366" stroke-width="1"/><path d="M515.5 341.5H522" stroke="#7a7d80" stroke-width="1"/></svg>
<svg style="left:0;top:0" width="1" height="1"><path d="M513.5 432.5H523.5V439.5L518.5 444.5L513.5 439.5Z" fill="#2b2b2b" stroke="#606366" stroke-width="1"/><path d="M515.5 436.5H522" stroke="#7a7d80" stroke-width="1"/></svg>
<svg style="left:0;top:0" width="1" height="1"><path d="M513.5 584.5H523.5V591.5L518.5 596.5L513.5 591.5Z" fill="#2b2b2b" stroke="#606366" stroke-width="1"/><path d="M515.5 588.5H522" stroke="#7a7d80" stroke-width="1"/></svg>
<svg style="left:0;top:0" width="1" height="1"><path d="M513.5 641.5H523.5V648.5L518.5 653.5L513.5 648.5Z" fill="#2b2b2b" stroke="#606366" stroke-width="1"/><path d="M515.5 645.5H522" stroke="#7a7d80" stroke-width="1"/></svg>
<svg style="left:0;top:0" width="1" height="1"><path d="M513.5 309.5H523.5V302.5L518.5 297.5L513.5 302.5Z" fill="#2b2b2b" stroke="#606366" stroke-width="1"/><path d="M515.5 305.5H522" stroke="#7a7d80" stroke-width="1"/></svg>
<svg style="left:0;top:0" width="1" height="1"><path d="M513.5 404.5H523.5V397.5L518.5 392.5L513.5 397.5Z" fill="#2b2b2b" stroke="#606366" stroke-width="1"/><path d="M515.5 400.5H522" stroke="#7a7d80" stroke-width="1"/></svg>
<svg style="left:0;top:0" width="1" height="1"><path d="M513.5 556.5H523.5V549.5L518.5 544.5L513.5 549.5Z" fill="#2b2b2b" stroke="#606366" stroke-width="1"/><path d="M515.5 552.5H522" stroke="#7a7d80" stroke-width="1"/></svg>
<svg style="left:0;top:0" width="1" height="1"><path d="M513.5 632.5H523.5V625.5L518.5 620.5L513.5 625.5Z" fill="#2b2b2b" stroke="#606366" stroke-width="1"/><path d="M515.5 628.5H522" stroke="#7a7d80" stroke-width="1"/></svg>
<svg style="left:0;top:0" width="1" height="1"><path d="M513.5 784.5H523.5V777.5L518.5 772.5L513.5 777.5Z" fill="#2b2b2b" stroke="#606366" stroke-width="1"/><path d="M515.5 780.5H522" stroke="#7a7d80" stroke-width="1"/></svg>
<div style="position:absolute;left:545px;top:332px;width:596px;height:81px;border:1px solid #e23b3b;box-sizing:content-box"></div>
<div style="position:absolute;left:1039px;top:796px;height:24px;white-space:pre;font:19px 'Liberation Serif', serif;line-height:24px;color:#9a9a9a"><span style="display:inline-block;width:10px;text-align:center">h</span><span style="display:inline-block;width:10px;text-align:center">t</span><span style="display:inline-block;width:10px;text-align:center">t</span><span style="display:inline-block;width:10px;text-align:center">p</span><span style="display:inline-block;width:10px;text-align:center">s</span><span style="display:inline-block;width:10px;text-align:center">:</span><span style="display:inline-block;width:10px;text-align:center">/</span><span style="display:inline-block;width:10px;text-align:center">/</span><span style="display:inline-block;width:10px;text-align:center">b</span><span style="display:inline-block;width:10px;text-align:center">l</span><span style="display:inline-block;width:10px;text-align:center">o</span><span style="display:inline-block;width:10px;text-align:center">g</span><span style="display:inline-block;width:10px;text-align:center">.</span><span style="display:inline-block;width:10px;text-align:center">c</span><span style="display:inline-block;width:10px;text-align:center">s</span><span style="display:inline-block;width:10px;text-align:center">d</span><span style="display:inline-block;width:10px;text-align:center">n</span><span style="display:inline-block;width:10px;text-align:center">.</span><span style="display:inline-block;width:10px;text-align:center">n</span><span style="display:inline-block;width:10px;text-align:center">e</span><span style="display:inline-block;width:10px;text-align:center">t</span><span style="display:inline-block;width:10px;text-align:center">/</span><span style="display:inline-block;width:10px;text-align:center">q</span><span style="display:inline-block;width:10px;text-align:center">q</span><span style="display:inline-block;width:10px;text-align:center">_</span><span style="display:inline-block;width:10px;text-align:center">2</span><span style="display:inline-block;width:10px;text-align:center">2</span><span style="display:inline-block;width:10px;text-align:center">6</span><span style="display:inline-block;width:10px;text-align:center">3</span><span style="display:inline-block;width:10px;text-align:center">8</span><span style="display:inline-block;width:10px;text-align:center">3</span><span style="display:inline-block;width:10px;text-align:center">9</span><span style="display:inline-block;width:10px;text-align:center">9</span></div>
</body></html>
